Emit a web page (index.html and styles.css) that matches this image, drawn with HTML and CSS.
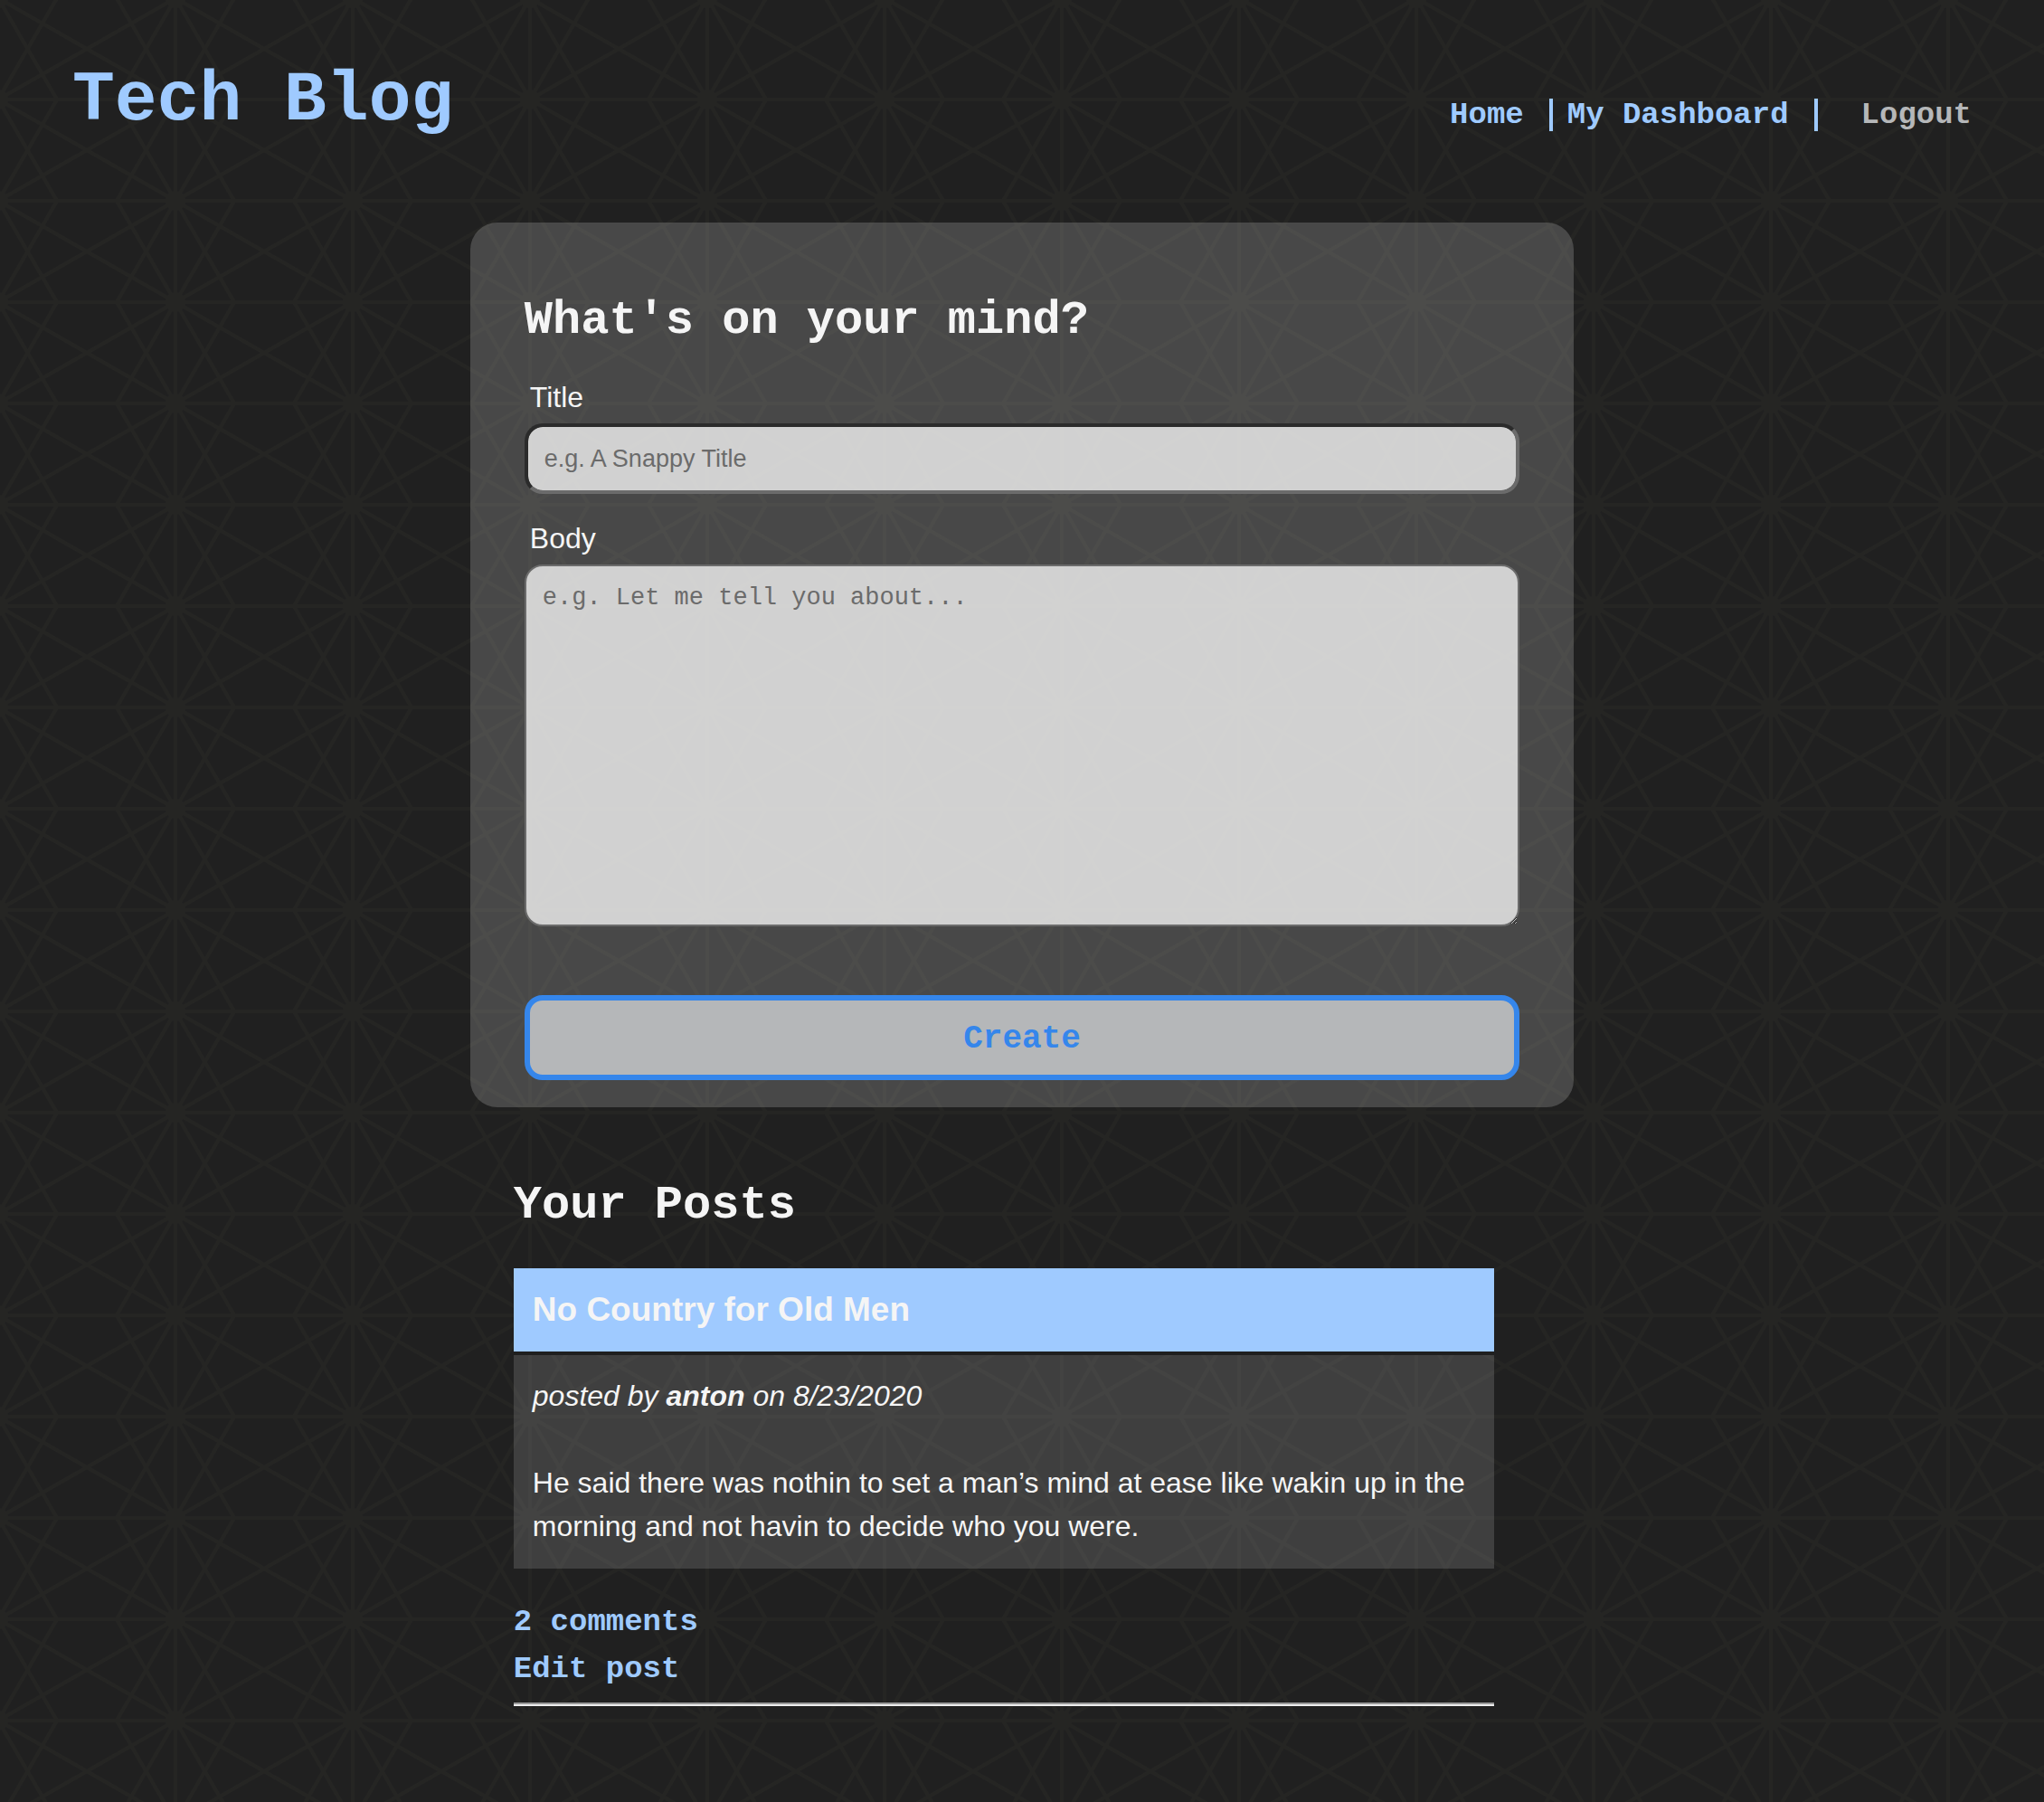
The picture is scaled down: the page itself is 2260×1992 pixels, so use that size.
FILE: index.html
```html
<!DOCTYPE html>
<html lang="en">
<head>
  <meta charset="utf-8">
  <meta name="viewport" content="width=device-width, initial-scale=1">
  <title>Tech Blog</title>
  <link rel="stylesheet" href="styles.css">
</head>
<body>
  <header class="site-header">
    <h1 class="site-title">Tech Blog</h1>
    <nav class="site-nav">
      <a class="nav-link" href="#home">Home</a>
      <a class="nav-link" href="#dashboard">My Dashboard</a>
      <button class="logout" type="button">Logout</button>
    </nav>
  </header>

  <main class="content">
    <form class="post-form">
      <h2 class="section-title">What's on your mind?</h2>
      <label class="field-label" for="post-title">Title</label>
      <input class="field field-input" id="post-title" type="text" placeholder="e.g. A Snappy Title">
      <label class="field-label" for="post-body">Body</label>
      <textarea class="field field-area" id="post-body" placeholder="e.g. Let me tell you about..."></textarea>
      <button class="create-button" type="submit">Create</button>
    </form>

    <section class="posts">
      <h2 class="section-title">Your Posts</h2>
      <article class="post">
        <h3 class="post-title">No Country for Old Men</h3>
        <div class="post-body">
          <p class="post-meta">posted by <strong>anton</strong> on 8/23/2020</p>
          <p class="post-text">He said there was nothin to set a man’s mind at ease like wakin up in the morning and not havin to decide who you were.</p>
        </div>
        <div class="post-links">
          <a class="post-link" href="#comments">2 comments</a>
          <a class="post-link" href="#edit">Edit post</a>
        </div>
        <hr class="divider">
      </article>
    </section>
  </main>
</body>
</html>
```
FILE: styles.css
```css
:root {
  --blue: #9fcaff;
  --bright-blue: #3586eb;
  --light: #f5f5f5;
  --dark: #1f1f1f;
  --grey: #b5b7b9;
  --mono: "Courier New", "Liberation Mono", monospace;
  --sans: "Liberation Sans", Arial, sans-serif;
}

* {
  box-sizing: border-box;
}

body {
  margin: 0;
  min-height: 100vh;
  color: var(--light);
  font-family: var(--sans);
  font-size: 32px;
  line-height: 48px;
  background-color: #202020;
  background-image: url("data:image/svg+xml,%3Csvg xmlns='http://www.w3.org/2000/svg' width='196' height='112'%3E%3Cg stroke='%23252523' stroke-width='4' fill='none'%3E%3Cpath d='M0 0H196M0 112H196M0 0V112M196 0V112M0 0L196 112M196 0L0 112M0 0L65 112M0 112L65 0M196 0L131 112M196 112L131 0'/%3E%3C/g%3E%3Cg fill='%23252523'%3E%3Ccircle r='11'/%3E%3Ccircle cx='196' r='11'/%3E%3Ccircle cy='112' r='11'/%3E%3Ccircle cx='196' cy='112' r='11'/%3E%3C/g%3E%3C/svg%3E");
  background-position: -2px -2px;
}

h1, h2, h3, p {
  margin: 0;
}

a {
  text-decoration: none;
}

.site-header {
  display: flex;
  flex-wrap: wrap;
  justify-content: space-between;
  align-items: flex-end;
  padding: 67px 80px 0;
}

.site-title {
  color: var(--blue);
  font-family: var(--mono);
  font-size: 78px;
  line-height: 88px;
}

.site-nav {
  display: flex;
  margin-bottom: 10px;
  font-family: var(--mono);
  font-size: 34px;
  font-weight: bold;
  line-height: 36px;
}

.nav-link {
  margin-right: 16px;
  padding-right: 28px;
  border-right: 4px solid var(--blue);
  color: var(--blue);
}

.logout {
  margin: 0 0 0 32px;
  padding: 0;
  border: 0;
  background: none;
  color: var(--grey);
  font: inherit;
}

.content {
  width: 54%;
  min-width: 640px;
  margin: 91px auto 0;
  padding-bottom: 80px;
}

.section-title {
  font-family: var(--mono);
  font-size: 52px;
  line-height: 60px;
}

.post-form {
  display: flex;
  flex-direction: column;
  padding: 79px 60px 30px;
  border-radius: 30px;
  background: rgba(255, 255, 255, 0.18);
}

.post-form .section-title {
  margin-bottom: 30px;
}

.field-label {
  padding: 0 6px;
  margin-bottom: 5px;
}

.field {
  width: 100%;
  margin: 0;
  padding: 18px;
  border-radius: 20px;
  background: rgba(255, 255, 255, 0.75);
  color: var(--dark);
}

.field::placeholder {
  color: #6b6b6b;
}

.field-input {
  height: 78px;
  margin-bottom: 25px;
  border: 4px solid;
  border-color: #2b2b2b #6b6b6b #6b6b6b #2b2b2b;
  background-clip: padding-box;
  font: 27px var(--sans);
}

.field-area {
  height: 400px;
  margin-bottom: 76px;
  padding-top: 20px;
  border: 2px solid #6b6b6b;
  font: 27px var(--mono);
}

.create-button {
  height: 94px;
  padding-top: 4px;
  border: 6px solid var(--bright-blue);
  border-radius: 20px;
  background: var(--grey);
  color: var(--bright-blue);
  font: bold 36px var(--mono);
}

.posts {
  padding: 79px 88px 0 48px;
}

.posts .section-title {
  margin-bottom: 39px;
}

.post-title {
  padding: 21px;
  background: var(--blue);
  font-size: 37px;
  line-height: 50px;
}

.post-body {
  display: grid;
  gap: 48px;
  padding: 21px 21px 23px;
  border-top: 4px solid var(--dark);
  background: rgba(255, 255, 255, 0.14);
  background-clip: padding-box;
}

.post-meta {
  font-style: italic;
}

.post-links {
  display: flex;
  flex-direction: column;
  align-items: flex-start;
  margin: 33px 0 11px;
}

.post-link {
  color: var(--blue);
  font-family: var(--mono);
  font-size: 34px;
  font-weight: bold;
  line-height: 52px;
}

.divider {
  margin: 0;
  border: 0;
  border-top: 2px solid #9a9a9a;
  border-bottom: 2px solid #eeeeee;
}
```
